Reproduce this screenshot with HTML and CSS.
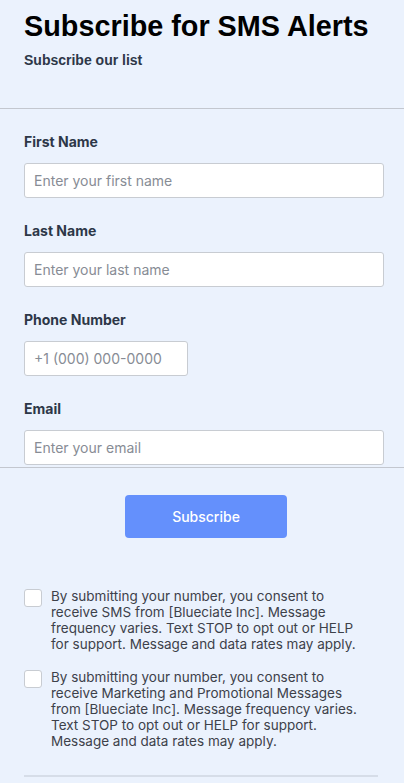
FILE: index.html
```html
<!DOCTYPE html>
<html lang="en">
<head>
    <meta charset="UTF-8">
    <meta name="viewport" content="width=device-width, initial-scale=1.0">
    <title>Subscribe for SMS Alerts</title>
    <link rel="stylesheet" href="styles.css">
</head>
<body>

<div class="page">
    <header class="page-header">
        <h1>Subscribe for SMS Alerts</h1>
        <p class="subtitle">Subscribe our list</p>
    </header>

    <form class="sms-form" id="smsForm">
        <div class="fields">
            <div class="field">
                <label for="first-name">First Name</label>
                <input type="text" id="first-name" name="first-name" placeholder="Enter your first name">
            </div>
            <div class="field">
                <label for="last-name">Last Name</label>
                <input type="text" id="last-name" name="last-name" placeholder="Enter your last name">
            </div>
            <div class="field">
                <label for="phone">Phone Number</label>
                <input type="tel" id="phone" name="phone" class="phone" placeholder="+1 (000) 000-0000">
            </div>
            <div class="field">
                <label for="email">Email</label>
                <input type="email" id="email" name="email" placeholder="Enter your email">
            </div>
        </div>

        <div class="actions">
            <button type="submit" class="btn-subscribe">Subscribe</button>
        </div>

        <div class="consents">
            <label class="consent">
                <input type="checkbox" name="sms-consent">
                <span>By submitting your number, you consent to receive SMS from [Blueciate Inc]. Message frequency varies. Text STOP to opt out or HELP for support. Message and data rates may apply.</span>
            </label>
            <label class="consent">
                <input type="checkbox" name="marketing-consent">
                <span>By submitting your number, you consent to receive Marketing and Promotional Messages from [Blueciate Inc]. Message frequency varies. Text STOP to opt out or HELP for support. Message and data rates may apply.</span>
            </label>
            <hr class="footer-line">
        </div>
    </form>
</div>

</body>
</html>
```

FILE: styles.css
```css
/* Base Styling */
* {
    box-sizing: border-box;
    margin: 0;
    padding: 0;
}
body {
    font-family: "Inter", "Noto Sans", sans-serif;
    background-color: #ebf2fd;
    color: #2d3748;
}

/* Header */
.page-header {
    padding: 10px 24px 40px;
    border-bottom: 1px solid #c3c7cf;
}
.page-header h1 {
    font-family: "Liberation Sans", Arial, sans-serif;
    font-size: 28.8px;
    font-weight: bold;
    color: #000;
}
.page-header .subtitle {
    font-family: "Liberation Sans", Arial, sans-serif;
    font-size: 14px;
    font-weight: bold;
    color: #2d3748;
    margin-top: 9px;
}

/* Fields */
.fields {
    padding: 25px 20px 2px 24px;
    border-bottom: 1px solid #c3c7cf;
}
.field {
    margin-bottom: 25px;
}
.field:last-child {
    margin-bottom: 0;
}
.field label {
    display: block;
    font-size: 14px;
    line-height: 16px;
    font-weight: 700;
    color: #2d3748;
    margin-bottom: 13px;
}
.field input {
    display: block;
    width: 100%;
    height: 35px;
    padding: 0 9px;
    background: #fff;
    border: 1px solid #c8ccd2;
    border-radius: 3px;
    font-family: inherit;
    font-size: 14px;
    color: #2d3748;
}
.field input::placeholder {
    color: #878c95;
}
.field input.phone {
    width: 164px;
}
.field input:focus {
    outline: none;
    border-color: #6490fc;
}

/* Button */
.actions {
    display: flex;
    justify-content: center;
    padding: 27px 0 0 8px;
}
.btn-subscribe {
    width: 162px;
    height: 43px;
    border: none;
    border-radius: 4px;
    background-color: #6490fc;
    color: #fff;
    font-family: inherit;
    font-size: 14px;
    font-weight: 500;
    cursor: pointer;
}

/* Consents */
.consents {
    padding: 50px 26px 0 24px;
}
.consent {
    display: flex;
    gap: 9px;
    padding-right: 13px;
    font-size: 13.5px;
    line-height: 16px;
    color: #3d414a;
    margin-bottom: 17px;
}
.consent input[type="checkbox"] {
    appearance: none;
    flex: none;
    width: 18px;
    height: 18px;
    margin-top: 1px;
    background: #fff;
    border: 1px solid #c8ccd2;
    border-radius: 3px;
}
.consent input[type="checkbox"]:checked {
    background-color: #6490fc;
    border-color: #6490fc;
}
.footer-line {
    border: none;
    border-top: 2px solid #d6dde8;
    margin-top: 26px;
}
```
